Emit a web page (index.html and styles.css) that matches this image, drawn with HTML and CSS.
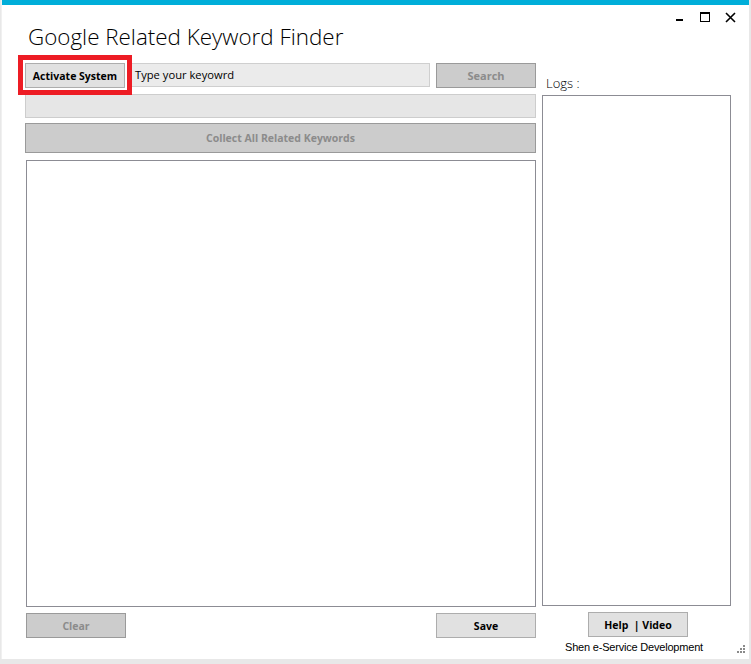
FILE: index.html
```html
<!DOCTYPE html>
<html lang="en">
  <head>
    <meta charset="UTF-8" />
    <title>Google Related Keyword Finder</title>
    <link rel="stylesheet" href="styles.css">
  </head>
  <body>
    <div class="window">
      <div class="accent-bar"></div>

      <!-- title bar with window buttons -->
      <div class="title-row">
        <h1 class="app-title">Google Related Keyword Finder</h1>
        <div class="win-controls">
          <span class="win-btn win-min"></span>
          <span class="win-btn win-max"></span>
          <svg class="win-btn win-close" width="11" height="11" viewBox="0 0 11 11">
            <path d="M1 1L10 10M10 1L1 10" stroke="#000" stroke-width="1.6" fill="none"/>
          </svg>
        </div>
      </div>

      <div class="content">
        <div class="main-col">
          <div class="search-row">
            <button class="btn btn-normal btn-activate">Activate System</button>
            <div class="keyword-input">Type your keyowrd</div>
            <button class="btn btn-disabled btn-search">Search</button>
          </div>
          <div class="progress-bar"></div>
          <button class="btn btn-disabled btn-collect">Collect All Related Keywords</button>
          <div class="results-box"></div>
          <div class="bottom-row">
            <button class="btn btn-disabled">Clear</button>
            <button class="btn btn-normal">Save</button>
          </div>
        </div>

        <div class="side-col">
          <div class="logs-label">Logs :</div>
          <div class="logs-box"></div>
          <div class="side-bottom">
            <button class="btn btn-normal">Help &nbsp;| Video</button>
            <div class="credit">Shen e-Service Development</div>
          </div>
        </div>
      </div>

      <!-- red highlight drawn over the activate button -->
      <div class="highlight"></div>

      <div class="grip">
        <svg width="8" height="8" viewBox="0 0 8 8">
          <rect x="6" y="0" width="2" height="2" fill="#8a8a8a"/>
          <rect x="3" y="3" width="2" height="2" fill="#8a8a8a"/>
          <rect x="6" y="3" width="2" height="2" fill="#8a8a8a"/>
          <rect x="0" y="6" width="2" height="2" fill="#8a8a8a"/>
          <rect x="3" y="6" width="2" height="2" fill="#8a8a8a"/>
          <rect x="6" y="6" width="2" height="2" fill="#8a8a8a"/>
        </svg>
      </div>
    </div>
  </body>
</html>
```

FILE: styles.css
```css
html, body {
  margin: 0;
  padding: 0;
  background: #e8e8e8;
}

body {
  width: 751px;
  height: 664px;
  overflow: hidden;
  font-family: "Open Sans", "Noto Sans", sans-serif;
  color: #000;
}

.window {
  position: relative;
  width: 748px;
  height: 659px;
  margin-left: 1px;
  background: #fff;
  border-left: 1px solid #f0f0f0;
  box-sizing: border-box;
}

.accent-bar {
  height: 5px;
  background: #00aed9;
}

.title-row {
  display: flex;
  justify-content: space-between;
  align-items: flex-start;
  height: 58px;
}

.app-title {
  margin: 17px 0 0 26px;
  font-size: 22.4px;
  font-weight: 300;
  letter-spacing: 0;
  line-height: 30px;
  color: #000;
}

.win-controls {
  display: flex;
  align-items: flex-start;
  margin: 7px 13px 0 0;
}

.win-btn {
  display: block;
}

.win-min {
  width: 7px;
  height: 2px;
  background: #000;
  margin: 7px 17px 0 0;
}

.win-max {
  width: 8px;
  height: 7px;
  border: 1px solid #000;
  border-top-width: 2px;
  margin: 0 15px 0 0;
}

.win-close {
  margin-top: 0;
}

.content {
  display: flex;
  gap: 6px;
  padding-left: 23px;
}

.main-col {
  width: 511px;
  display: flex;
  flex-direction: column;
}

.search-row {
  display: flex;
  gap: 6px;
  height: 25px;
}

.btn {
  box-sizing: border-box;
  width: 100px;
  height: 25px;
  padding: 0;
  font-family: "Open Sans", "Noto Sans", sans-serif;
  font-size: 10.5px;
  font-weight: 700;
  cursor: default;
}

.btn-normal {
  background: #e1e1e1;
  border: 1px solid #adadad;
  color: #000;
}

.btn-disabled {
  background: #cccccc;
  border: 1px solid #9a9a9a;
  color: #8b8b8b;
}

.btn-search {
  font-size: 11px;
}

.keyword-input {
  box-sizing: border-box;
  width: 299px;
  height: 24px;
  background: #ebebeb;
  border: 1px solid #cfcfcf;
  padding: 2px 3px;
  font-size: 11.2px;
  line-height: 18px;
}

.progress-bar {
  box-sizing: border-box;
  height: 24px;
  margin-top: 6px;
  background: #e6e6e6;
  border: 1px solid #cdcdcd;
}

.btn-collect {
  width: 511px;
  height: 30px;
  margin-top: 5px;
}

.results-box {
  box-sizing: border-box;
  height: 447px;
  margin-top: 7px;
  margin-left: 1px;
  border: 1px solid #8c8c94;
  background: #fff;
}

.bottom-row {
  display: flex;
  justify-content: space-between;
  margin-top: 6px;
  padding-left: 1px;
}

.side-col {
  width: 189px;
  display: flex;
  flex-direction: column;
}

.logs-label {
  height: 32px;
  padding-top: 11px;
  box-sizing: border-box;
  padding-left: 4px;
  font-size: 13px;
  font-weight: 300;
  line-height: 18px;
}

.logs-box {
  box-sizing: border-box;
  height: 511px;
  border: 1px solid #8c8c94;
  background: #fff;
}

.side-bottom {
  display: flex;
  flex-direction: column;
  align-items: center;
  margin-top: 6px;
  padding-left: 3px;
}

.credit {
  margin-top: 3px;
  margin-right: 8px;
  font-family: "Liberation Sans", Arial, sans-serif;
  font-size: 11px;
  line-height: 14px;
  letter-spacing: -0.2px;
}

.highlight {
  position: absolute;
  left: 16px;
  top: 55px;
  width: 114px;
  height: 40px;
  box-sizing: border-box;
  border: 5px solid #ed1c24;
}

.grip {
  position: absolute;
  right: 4px;
  bottom: 6px;
  line-height: 0;
}
```
